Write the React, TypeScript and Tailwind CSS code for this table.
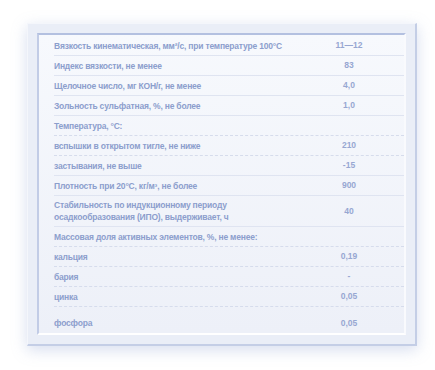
import React from 'react';

type Row = {
  label: React.ReactNode;
  value?: string;
  line: 'solid' | 'dashed' | 'none';
  tall?: boolean;
};

const ROWS: Row[] = [
  { label: 'Вязкость кинематическая, мм²/с, при температуре 100°С', value: '11—12', line: 'solid' },
  { label: 'Индекс вязкости, не менее', value: '83', line: 'solid' },
  { label: 'Щелочное число, мг КОН/г, не менее', value: '4,0', line: 'solid' },
  { label: 'Зольность сульфатная, %, не более', value: '1,0', line: 'solid' },
  { label: 'Температура, °С:', line: 'dashed' },
  { label: 'вспышки в открытом тигле, не ниже', value: '210', line: 'dashed' },
  { label: 'застывания, не выше', value: '-15', line: 'solid' },
  { label: 'Плотность при 20°С, кг/м³, не более', value: '900', line: 'solid' },
  {
    label: (
      <>
        Стабильность по индукционному периоду
        <br />
        осадкообразования (ИПО), выдерживает, ч
      </>
    ),
    value: '40',
    line: 'solid',
    tall: true,
  },
  { label: 'Массовая доля активных элементов, %, не менее:', line: 'dashed' },
  { label: 'кальция', value: '0,19', line: 'dashed' },
  { label: 'бария', value: '-', line: 'dashed' },
  { label: 'цинка', value: '0,05', line: 'dashed' },
  { label: 'фосфора', value: '0,05', line: 'none' },
];

const lineClass = {
  solid: 'border-b border-solid border-[#dfe4f1]',
  dashed: 'border-b border-dashed border-[#d6dcec]',
  none: 'pt-[12px]',
};

export default function App() {
  return (
    <div className="w-[435px] h-[370px] bg-white pt-[23px] pl-[27px] font-['Liberation_Sans',sans-serif]">
      <div className="w-[390px] h-[323px] bg-[#eaeef7] border-r-2 border-b-2 border-t border-l border-t-[#f4f6fb] border-l-[#f4f6fb] border-r-[#c4cee6] border-b-[#c4cee6] shadow-[0_4px_14px_rgba(140,160,210,0.35)] p-[9px]">
        <div className="h-[302px] bg-gradient-to-b from-[#f7f9fd] to-[#edf0f8] border-t-2 border-l-2 border-t-[#b3c0e0] border-l-[#c2cce6] border-b-2 border-r-2 border-b-white border-r-[#f9fafd] pt-[1px]">
          {ROWS.map((r, i) => (
            <div
              key={i}
              className={`ml-[15px] flex items-center ${r.tall ? 'h-[31px]' : 'h-[20px]'} ${lineClass[r.line]}`}
            >
              <div className="flex-1 text-[8.5px] font-bold leading-[12px] tracking-[-0.2px] text-[#8c9ecd]">
                {r.label}
              </div>
              {r.value !== undefined && (
                <div className="w-[80px] mr-[15px] text-center text-[8.5px] font-bold text-[#97a7d2]">
                  {r.value}
                </div>
              )}
            </div>
          ))}
        </div>
      </div>
    </div>
  );
}
